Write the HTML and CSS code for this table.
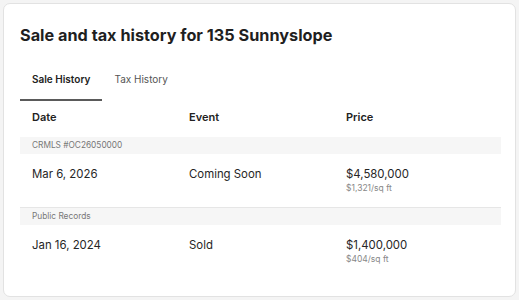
FILE: index.html
```html
<!DOCTYPE html>
<html>
<head>
<meta charset="utf-8">
<link rel="stylesheet" href="styles.css">
</head>
<body>
<div class="card">
  <h2 class="title">Sale and tax history for 135 Sunnyslope</h2>
  <div class="tabs">
    <div class="tab active">Sale History</div>
    <div class="tab">Tax History</div>
  </div>
  <div class="table">
    <div class="row head">
      <div>Date</div><div>Event</div><div>Price</div>
    </div>
    <div class="band">CRMLS #OC26050000</div>
    <div class="row item">
      <div>Mar 6, 2026</div>
      <div>Coming Soon</div>
      <div><div>$4,580,000</div><div class="sub">$1,321/sq ft</div></div>
    </div>
    <div class="band top-line">Public Records</div>
    <div class="row item">
      <div>Jan 16, 2024</div>
      <div>Sold</div>
      <div><div>$1,400,000</div><div class="sub">$404/sq ft</div></div>
    </div>
  </div>
</div>
</body>
</html>
```
FILE: styles.css
```css
* { box-sizing: border-box; }
html, body { margin: 0; padding: 0; }
body {
  background: #f4f4f4;
  font-family: Inter, "Open Sans", sans-serif;
  color: #222;
  padding: 3px 3px 3px 3px;
}
.card {
  background: #fff;
  border: 1px solid #e2e2e2;
  border-radius: 7px;
  height: 294px;
  padding: 22px 14px 0 16px;
}
.title {
  margin: 0;
  font-size: 16.25px;
  line-height: 19px;
  font-weight: 700;
  color: #1f1f1f;
}
.tabs {
  display: flex;
  margin-top: 16px;
}
.tab {
  font-size: 10px;
  line-height: 14px;
  padding: 11px 12px 13px 12px;
  color: #555;
  border-bottom: 2px solid transparent;
}
.tab.active {
  font-weight: 600;
  color: #222;
  border-bottom-color: #5a5a5a;
}
.table { display: flex; flex-direction: column; }
.row {
  display: grid;
  grid-template-columns: 157px 157px 1fr;
  padding: 0 12px;
}
.row.head {
  font-size: 11px;
  line-height: 14px;
  font-weight: 600;
  padding-top: 9px;
  padding-bottom: 13px;
}
.band {
  background: #f6f6f6;
  font-size: 8.3px;
  line-height: 17px;
  color: #777;
  padding: 0 12px;
}
.band.top-line { border-top: 1px solid #e6e6e6; }
.row.item {
  font-size: 11.4px;
  line-height: 16px;
  padding-top: 12px;
  padding-bottom: 13px;
  color: #262626;
}
.sub {
  font-size: 8.5px;
  line-height: 12px;
  color: #888;
}
```
